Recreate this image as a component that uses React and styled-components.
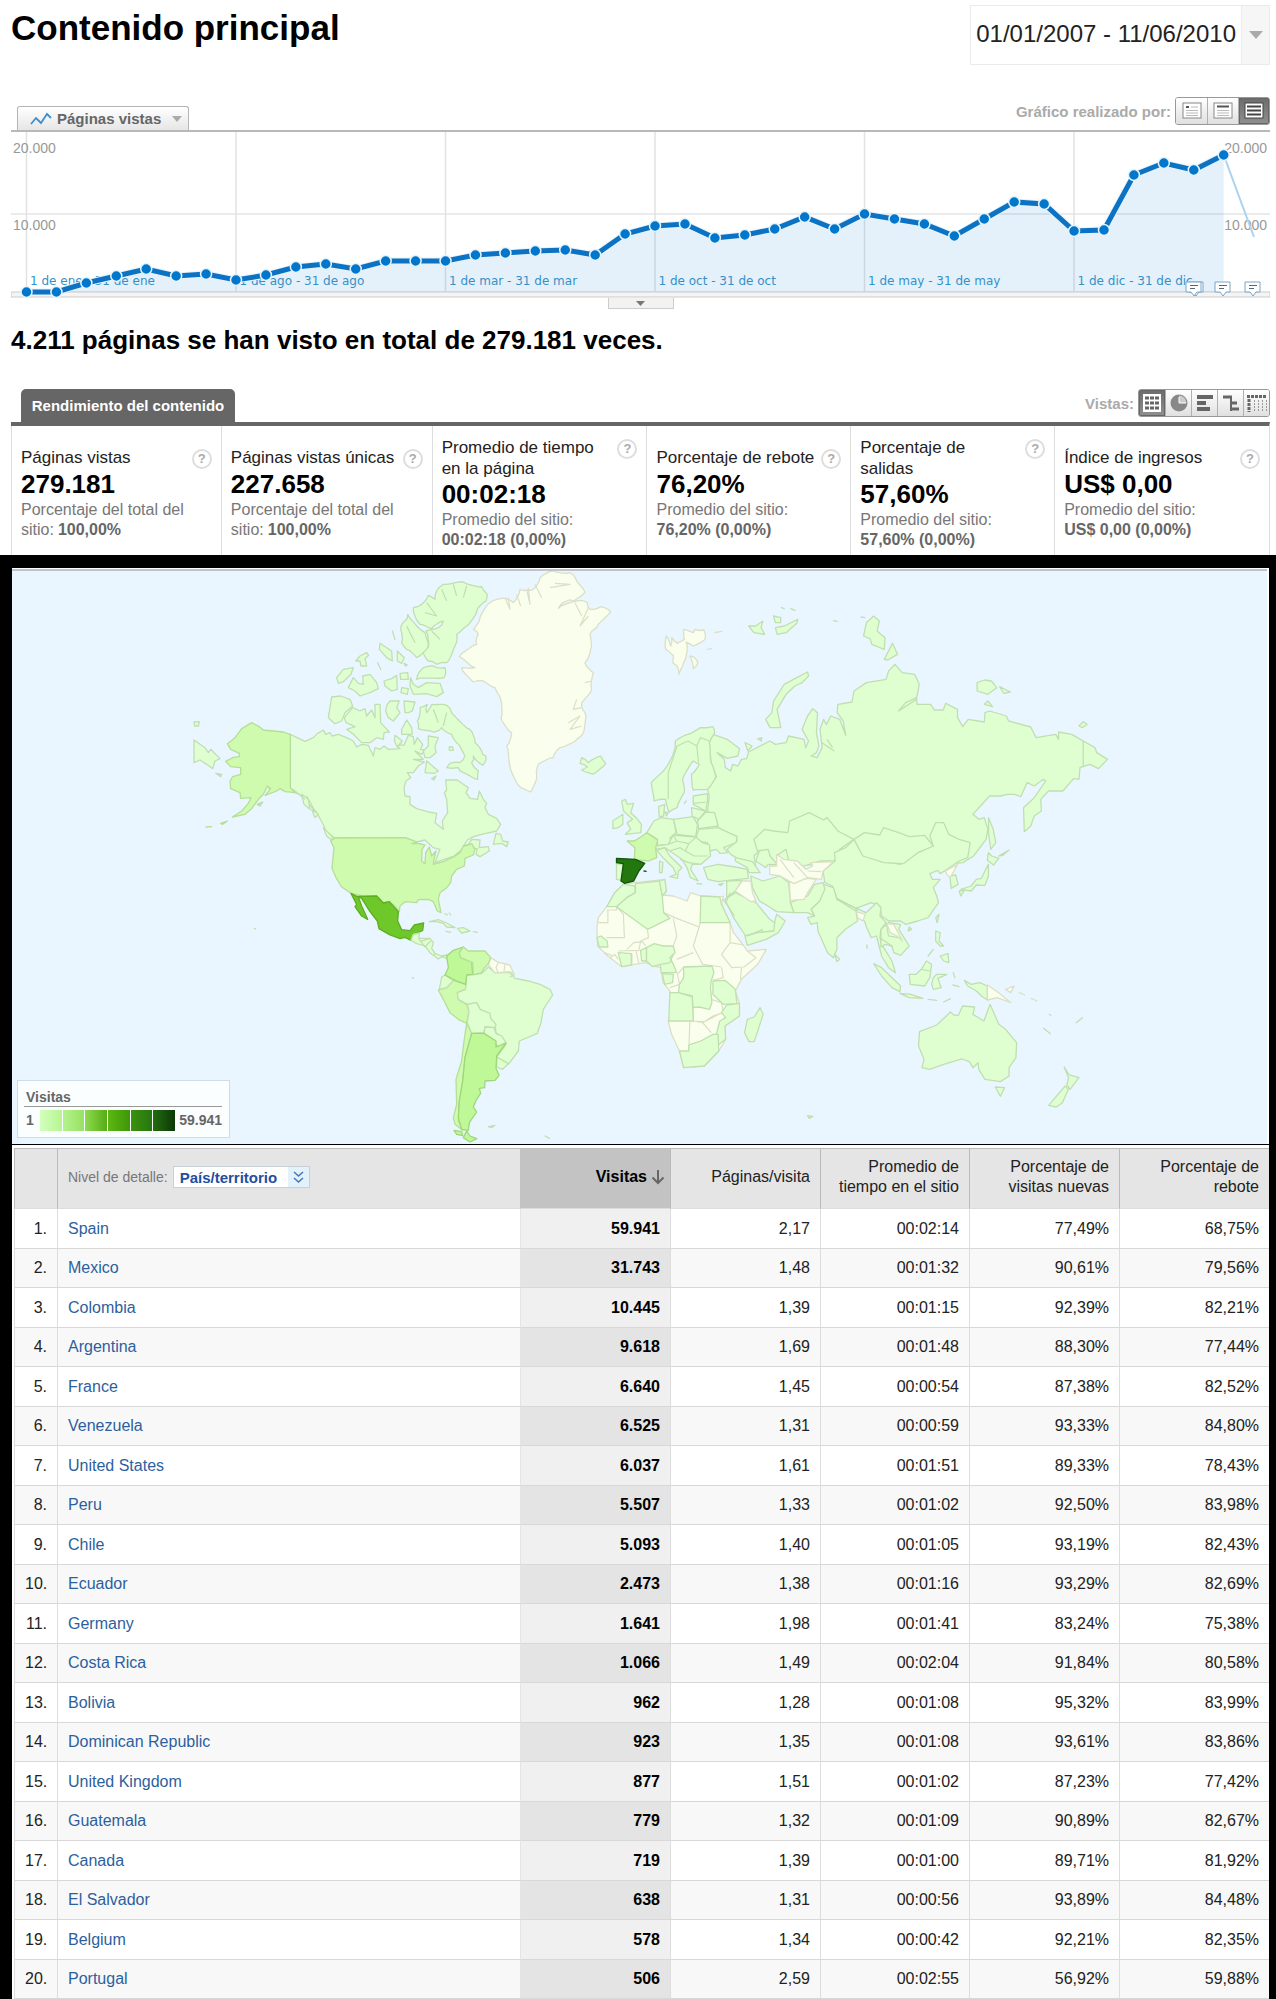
import React from 'react';
import styled, { createGlobalStyle, css } from 'styled-components';

const GlobalStyle = createGlobalStyle`
  * { box-sizing: border-box; }
  html, body { margin: 0; padding: 0; background: #000; }
  body, button, select {
    font-family: "Liberation Sans", Arial, Helvetica, sans-serif;
  }
  h1, h2, p, ul, dl, dd, dt { margin: 0; padding: 0; }
  button { padding: 0; cursor: pointer; }
`;

/* ---------- summary section ---------- */

const Summary = styled.section`
  background: #fff;
  padding: 5px 6px 0 11px;
`;

const Header = styled.header`
  display: flex;
  justify-content: space-between;
  align-items: flex-start;
  margin-bottom: 32px;
`;

const Title = styled.h1`
  font-size: 35px;
  line-height: 46px;
  color: #000;
`;

const DateButton = styled.button`
  display: flex;
  align-items: stretch;
  height: 60px;
  border: 1px solid #ebebeb;
  background: #fff;
  color: #222;
  font-size: 24px;
`;

const DateText = styled.span`
  display: flex;
  align-items: center;
  padding: 0 5px 2px 5px;
`;

const DateArrow = styled.span`
  display: flex;
  align-items: center;
  justify-content: center;
  width: 28px;
  border-left: 1px solid #ebebeb;
  background: #f6f6f6;
`;

const Toolbar = styled.div`
  display: flex;
  justify-content: space-between;
  align-items: flex-start;
`;

const MetricTab = styled.button`
  display: flex;
  align-items: center;
  gap: 5px;
  width: 172px;
  height: 24px;
  margin: 9px 0 0 6px;
  padding: 0 6px 0 12px;
  border: 1px solid #b4b4b4;
  border-bottom: 0;
  border-radius: 3px 3px 0 0;
  background: linear-gradient(#fff, #e6e6e6);
  color: #666;
  font-size: 15px;
  font-weight: bold;
  svg:last-child { margin-left: auto; }
`;

const Views = styled.div`
  display: flex;
  align-items: center;
  gap: 4px;
  color: #aaa;
  font-size: 15px;
  font-weight: bold;
`;

const ButtonGroup = styled.div`
  display: flex;
  height: 28px;
  border: 1px solid #999;
  border-radius: 3px;
  overflow: hidden;
`;

const IconButton = styled.button`
  display: flex;
  align-items: center;
  justify-content: center;
  width: ${(p) => (p.$wide ? 31 : 26)}px;
  border: 0;
  background: linear-gradient(#fff, #e0e0e0);
  & + & { border-left: 1px solid #b0b0b0; }
  ${(p) => p.$active && css`
    background: linear-gradient(#6c6c6c, #8f8f8f);
    box-shadow: inset 0 0 0 1px #666;
  `}
`;

const ChartPanel = styled.div`
  display: flex;
  flex-direction: column;
  align-items: center;
  border-top: 2px solid #b8b8b8;
  svg.plot { display: block; width: 100%; height: auto; }
`;

const Handle = styled.button`
  display: flex;
  align-items: center;
  justify-content: center;
  width: 66px;
  height: 11px;
  border: 1px solid #ccc;
  border-top: 0;
  background: #f2f2f2;
`;

const Headline = styled.h2`
  margin: 15px 0 33px;
  font-size: 26px;
  line-height: 32px;
  color: #000;
`;

const SectionTab = styled.div`
  width: 214px;
  height: 33px;
  margin-left: 10px;
  border-radius: 5px 5px 0 0;
  background: #666;
  color: #fff;
  font-size: 15px;
  font-weight: bold;
  line-height: 33px;
  text-align: center;
`;

const Metrics = styled.dl`
  display: grid;
  grid-template-columns: 210fr 211fr 215fr 204fr 204fr 215fr;
  height: 133px;
  border-top: 4px solid #666;
  border-right: 1px solid #ddd;
`;

const Metric = styled.div`
  display: flex;
  flex-direction: column;
  justify-content: center;
  padding: 5px 9px 0 9px;
  border-left: 1px solid #ddd;
`;

const MetricLabel = styled.dt`
  display: flex;
  justify-content: space-between;
  align-items: flex-start;
  gap: 4px;
  color: #222;
  font-size: 17px;
  line-height: 21px;
`;

const MetricValue = styled.dd`
  font-size: 26px;
  font-weight: bold;
  line-height: 31px;
  color: #000;
`;

const MetricNote = styled.dd`
  color: #777;
  font-size: 16px;
  line-height: 20px;
`;

const NoteLine = styled.span`
  display: flex;
  gap: 4px;
  b { color: #666; }
`;

const Help = styled.button`
  flex: none;
  width: 20px;
  height: 20px;
  margin-top: 2px;
  border: 2px solid #ddd;
  border-radius: 50%;
  background: #fff;
  color: #aaa;
  font-size: 13px;
  font-weight: bold;
  line-height: 16px;
`;

/* ---------- map and table section ---------- */

const Detail = styled.section`
  padding: 13px 7px 1px 12px;
  background: #000;
`;

const MapPanel = styled.div`
  position: relative;
  padding: 1px 2px 0 0;
  background: #fff;
  border-bottom: 1px solid #000;
  svg.world {
    display: block;
    width: 100%;
    height: auto;
    border-top: 2px solid #c2c2cc;
    background: #e9f6ff;
  }
`;

const Legend = styled.div`
  position: absolute;
  left: 5px;
  bottom: 6px;
  width: 213px;
  padding: 8px 7px 6px 6px;
  border: 1px solid #cfdce6;
  background: #fbfeff;
  color: #666;
  font-size: 14px;
  font-weight: bold;
`;

const LegendTitle = styled.p`
  padding-left: 2px;
  border-bottom: 1px solid #999;
  line-height: 17px;
`;

const LegendScale = styled.div`
  display: flex;
  align-items: center;
  gap: 4px;
  padding: 3px 0 0 2px;
  line-height: 21px;
`;

const Ramp = styled.div`
  display: flex;
  flex: 1;
  gap: 1px;
  height: 21px;
  margin-left: 2px;
`;

const Swatch = styled.span`
  flex: 1;
  background: linear-gradient(90deg, ${(p) => p.$from}, ${(p) => p.$to});
`;

const TablePanel = styled.div`
  padding: 3px 0 0 2px;
  background: #fff;
`;

const Table = styled.table`
  width: 100%;
  table-layout: fixed;
  border-collapse: separate;
  border-spacing: 0;
  color: #222;
  font-size: 16px;
  line-height: 20px;
`;

const Col = styled.col`
  width: ${(p) => p.$w};
`;

const HeadCell = styled.th`
  height: 61px;
  padding: 0 10px 3px;
  border-top: 1px solid #bbb;
  border-left: 1px solid ${(p) => (p.$sorted ? '#c3c3c3' : '#bbb')};
  border-bottom: 1px solid #ddd;
  background: ${(p) => (p.$sorted ? '#c3c3c3' : '#e5e5e5')};
  color: ${(p) => (p.$sorted ? '#000' : '#222')};
  font-weight: ${(p) => (p.$sorted ? 'bold' : 'normal')};
  text-align: ${(p) => (p.$left ? 'left' : 'right')};
  ${(p) => p.$sorted && css`padding-right: 5px;`}
`;

const SortLabel = styled.span`
  display: flex;
  align-items: center;
  justify-content: flex-end;
  gap: 4px;
`;

const LevelLabel = styled.label`
  display: flex;
  align-items: center;
  gap: 5px;
  color: #777;
  font-size: 14px;
`;

const SelectBox = styled.span`
  position: relative;
  display: inline-flex;
  svg { position: absolute; right: 1px; top: 1px; pointer-events: none; }
`;

const Select = styled.select`
  appearance: none;
  width: 137px;
  height: 22px;
  padding: 0 24px 0 6px;
  border: 1px solid #c5d0da;
  border-radius: 0;
  background: #fff;
  color: #1f4ea1;
  font-size: 15px;
  font-weight: bold;
`;

const Row = styled.tr`
  background: #fff;
  td { height: 40px; }
  &:nth-child(even) { background: #f8f8f8; }
  &:nth-child(even) td { height: 39px; }
`;

const Cell = styled.td`
  padding: 0 10px;
  border-left: 1px solid #ddd;
  border-bottom: 1px solid #d8d8d8;
  text-align: ${(p) => (p.$left ? 'left' : 'right')};
  ${(p) => p.$sorted && css`
    border-left-color: #e4e4e4;
    background: #f0f0f0;
    color: #000;
    font-weight: bold;
    ${Row}:nth-child(even) & { background: #e4e4e4; }
  `}
`;

const CountryLink = styled.a`
  color: #2d5f9e;
  text-decoration: none;
`;

/* ---------- data ---------- */

const metrics = [
  { label: 'Páginas vistas', value: '279.181', note: 'Porcentaje del total del', prefix: 'sitio:', strong: '100,00%' },
  { label: 'Páginas vistas únicas', value: '227.658', note: 'Porcentaje del total del', prefix: 'sitio:', strong: '100,00%' },
  { label: 'Promedio de tiempo en la página', value: '00:02:18', note: 'Promedio del sitio:', strong: '00:02:18 (0,00%)' },
  { label: 'Porcentaje de rebote', value: '76,20%', note: 'Promedio del sitio:', strong: '76,20% (0,00%)' },
  { label: 'Porcentaje de salidas', value: '57,60%', note: 'Promedio del sitio:', strong: '57,60% (0,00%)' },
  { label: 'Índice de ingresos', value: 'US$ 0,00', note: 'Promedio del sitio:', strong: 'US$ 0,00 (0,00%)' },
];

const rows = [
  ['Spain', '59.941', '2,17', '00:02:14', '77,49%', '68,75%'],
  ['Mexico', '31.743', '1,48', '00:01:32', '90,61%', '79,56%'],
  ['Colombia', '10.445', '1,39', '00:01:15', '92,39%', '82,21%'],
  ['Argentina', '9.618', '1,69', '00:01:48', '88,30%', '77,44%'],
  ['France', '6.640', '1,45', '00:00:54', '87,38%', '82,52%'],
  ['Venezuela', '6.525', '1,31', '00:00:59', '93,33%', '84,80%'],
  ['United States', '6.037', '1,61', '00:01:51', '89,33%', '78,43%'],
  ['Peru', '5.507', '1,33', '00:01:02', '92,50%', '83,98%'],
  ['Chile', '5.093', '1,40', '00:01:05', '93,19%', '82,43%'],
  ['Ecuador', '2.473', '1,38', '00:01:16', '93,29%', '82,69%'],
  ['Germany', '1.641', '1,98', '00:01:41', '83,24%', '75,38%'],
  ['Costa Rica', '1.066', '1,49', '00:02:04', '91,84%', '80,58%'],
  ['Bolivia', '962', '1,28', '00:01:08', '95,32%', '83,99%'],
  ['Dominican Republic', '923', '1,35', '00:01:08', '93,61%', '83,86%'],
  ['United Kingdom', '877', '1,51', '00:01:02', '87,23%', '77,42%'],
  ['Guatemala', '779', '1,32', '00:01:09', '90,89%', '82,67%'],
  ['Canada', '719', '1,39', '00:01:00', '89,71%', '81,92%'],
  ['El Salvador', '638', '1,31', '00:00:56', '93,89%', '84,48%'],
  ['Belgium', '578', '1,34', '00:00:42', '92,21%', '82,35%'],
  ['Portugal', '506', '2,59', '00:02:55', '56,92%', '59,88%'],
];

const swatches = [
  ['#d3ffbd', '#b6f592'],
  ['#b4f28c', '#98e262'],
  ['#8edb4f', '#57ac15'],
  ['#5cb812', '#3f9609'],
  ['#3c910f', '#26760e'],
  ['#236c10', '#0d3806'],
];

/* ---------- line chart ---------- */

const series = [
  160, 160, 151, 144, 137, 144, 142, 148, 143, 135, 132, 137, 129, 129, 129, 123, 121, 119,
  118, 123, 102, 94, 92, 106, 103, 97, 85, 97, 82, 87, 92, 104, 87, 70, 72, 99, 98, 43, 31, 38, 23,
];
const pointX = (i) => 15.5 + i * 29.93;
const months = ['ene', 'ago', 'mar', 'oct', 'may', 'dic'];

function Note({ x, double }) {
  return (
    <g transform={`translate(${x} 149)`} fill="#fff" stroke="#7ba6c4">
      {double && <path d="M3 1h14v10h-4l-3 4-3-4H3z" />}
      <path d="M0 1h15v10h-4l-3 4-3-4H0z" />
      <path d="M4 4.500h8M4 7.500h5" stroke="#567" />
    </g>
  );
}

function PageviewsChart() {
  const pts = series.map((y, i) => `${pointX(i)},${y}`);
  const lastX = pointX(series.length - 1);
  return (
    <svg className="plot" viewBox="0 0 1259 166" role="img" aria-label="Páginas vistas">
      <rect x="0" y="160" width="1259" height="5" fill="#f4f4f4" stroke="#ccc" />
      <path d="M0 82H1259" stroke="#e4e4e4" strokeWidth="1.500" />
      {months.map((m, i) => (
        <path key={m} d={`M${15.5 + i * 209.500} 0V160`} stroke="#e2e2e2" strokeWidth="1.500" />
      ))}
      <g fontFamily="Liberation Sans, Arial, sans-serif" fontSize="14" fill="#999">
        <text x="2" y="21">20.000</text>
        <text x="2" y="98">10.000</text>
        <text x="1256" y="21" textAnchor="end">20.000</text>
        <text x="1256" y="98" textAnchor="end">10.000</text>
      </g>
      <polygon points={`15.5,160 ${pts.join(' ')} ${lastX},160`} fill="#0077cc" fillOpacity="0.1" />
      <g fontFamily="DejaVu Sans, Verdana, sans-serif" fontSize="12" fill="#3590c8">
        {months.map((m, i) => (
          <text key={m} x={19 + i * 209.500} y="153">{`1 de ${m} - 31 de ${m}`}</text>
        ))}
      </g>
      <path d={`M${lastX} 23L1243 105`} stroke="#a9d3ee" strokeWidth="2" />
      <polyline points={pts.join(' ')} fill="none" stroke="#e6f3fb" strokeWidth="7" />
      <polyline points={pts.join(' ')} fill="none" stroke="#0b72c4" strokeWidth="5" />
      {series.map((y, i) => (
        <circle key={i} cx={pointX(i)} cy={y} r="5.500" fill="#0077cc" stroke="#e6f3fb" strokeWidth="1.500" />
      ))}
      <Note x={1175} double />
      <Note x={1204} />
      <Note x={1234} />
    </svg>
  );
}

/* ---------- world map ---------- */

const shades = {
  none: ['#f9ffec', '#dcdfc6'],
  low: ['#dfffd1', '#c0dfb0'],
  mid: ['#cefbae', '#b5de97'],
  high: ['#bff896', '#9fd67a'],
  mexico: ['#6fc82a', '#5cae1e'],
  spain: ['#22780f', '#14540a'],
};

/* Breaks each edge into short steps that zigzag, for fjord coasts. */
function rugged(points, amp) {
  const p = points.split(' ').map((s) => s.split(',').map(Number));
  const out = [];
  p.forEach(([x, y], i) => {
    const [nx, ny] = p[(i + 1) % p.length];
    const len = Math.hypot(nx - x, ny - y);
    const n = Math.max(1, Math.floor(len / 9));
    for (let k = 0; k < n; k += 1) {
      const w = k === 0 ? 0 : Math.sin((x + k * 37) * 12.9 + y * 7.1) * amp;
      const t = k / n;
      out.push(`${(x + (nx - x) * t - ((ny - y) / len) * w).toFixed(1)},${(y + (ny - y) * t + ((nx - x) / len) * w).toFixed(1)}`);
    }
  });
  return out.join(' ');
}

function Land({ shade = 'low', rough = 0, shapes }) {
  const [fill, stroke] = shades[shade];
  return shapes.map((s, i) => (
    <polygon
      key={i}
      points={rough ? rugged(s, rough) : s}
      fill={fill}
      stroke={stroke}
      strokeWidth="1.300"
      strokeLinejoin="round"
      vectorEffect="non-scaling-stroke"
    />
  ));
}

function Lines({ shade = 'low', d }) {
  return <path d={d} fill="none" stroke={shades[shade][1]} strokeWidth="1.200" strokeLinejoin="round" vectorEffect="non-scaling-stroke" />;
}

function NorthAmerica() {
  return (
    <g transform="translate(180 565) scale(0.33333)">
      <Land shapes={[
        '331,505 375,526 400,515 412,503 430,492 437,505 450,500 456,510 475,505 500,515 520,525 530,543 545,535 565,538 580,570 585,545 600,550 612,540 625,550 660,548 650,535 672,538 685,508 700,512 703,535 712,515 728,535 722,550 735,552 725,565 705,555 730,580 700,580 733,588 715,600 700,620 682,620 692,635 678,645 672,665 675,690 690,692 690,715 710,728 745,738 770,742 765,770 790,790 787,765 803,740 800,700 793,680 800,672 797,642 832,642 850,655 865,665 858,680 870,697 893,700 898,675 910,700 920,712 915,725 925,745 950,757 962,775 950,795 905,805 880,812 862,822 850,840 865,835 875,820 900,822 898,845 925,842 928,855 900,872 888,865 892,848 865,845 840,855 822,870 765,890 775,862 780,850 760,845 735,822 710,828 675,815 465,816 440,800 432,780 410,740 385,712 370,690 345,680 331,665',
        '948,802 962,805 968,825 985,828 980,842 965,832 940,835',
        '42,522 75,545 85,560 92,550 120,578 105,585 98,608 80,595 60,582 42,590',
        '42,468 58,467 55,480 44,480', '107,622 125,625 122,632', '265,665 290,660 298,668 280,676', '430,785 455,810 462,828 440,810',
        '365,685 385,700 390,730 372,715', '395,730 415,745 405,755',
        '455,393 482,390 510,400 518,420 495,440 485,465 465,473 445,455',
        '518,425 540,435 555,428 560,450 575,432 585,455 585,415 600,415 602,470 628,498 612,500 610,520 590,515 570,530 545,530 520,505 500,490 525,482 498,470 493,455',
        '620,418 630,405 658,405 650,425 660,440 640,465 625,455 617,435', '672,405 705,408 697,435 685,440 675,440', '680,462 695,485 697,505 665,505 665,490', '645,508 667,525 652,543 643,525',
        '745,510 775,515 765,540 768,560 750,575 735,575 730,555 745,540', '740,585 775,615 762,622 735,620', '808,542 818,543 820,553 808,553', '755,638 768,630 762,642',
        '470,335 490,310 520,305 513,325 490,347 475,352', '505,365 520,335 535,352 550,355 548,330 570,325 590,350 595,368 570,380 540,390 525,375',
        '600,232 612,240 635,255 637,285 620,275 598,250', '652,255 673,275 665,292 652,285', '540,270 560,260 566,268 555,278 560,300 543,300 540,285 527,285',
        '612,345 635,338 650,328 652,370 635,375 615,360', '660,322 683,320 685,340 662,340', '665,365 685,368 682,385 663,380',
        '692,335 700,355 715,365 740,350 780,352 790,380 770,392 740,383 700,385 690,360', '637,195 645,220', '593,290 602,310', '672,292 682,297 677,300',
      ]} />
      <Land rough={3.500} shapes={[
        '770,75 790,55 850,48 905,62 922,85 918,105 890,135 860,180 830,205 825,240 800,290 770,295 745,285 725,255 745,245 738,195 775,185 790,165 755,188 720,175 705,150 700,125 725,115 745,88 765,100',
        '683,145 710,180 735,200 745,240 710,275 680,250 665,230 662,190 675,165',
        '725,310 760,300 795,305 792,335 710,340',
        '720,425 742,415 740,440 755,415 800,418 815,440 870,490 885,530 908,565 918,570 908,598 880,570 875,590 895,615 893,640 850,620 835,605 800,605 810,592 838,590 855,570 830,530 815,505 785,485 760,498 715,488 712,465',
      ]} />
      <Land shade="none" rough={3.500} shapes={[
        '930,110 965,97 1000,110 1020,70 1060,70 1080,35 1120,15 1170,20 1190,45 1215,78 1180,105 1160,105 1135,127 1190,105 1222,110 1230,130 1262,122 1292,138 1250,185 1230,205 1232,250 1215,290 1240,320 1235,370 1205,410 1215,440 1212,495 1190,520 1140,545 1120,575 1075,595 1070,630 1052,678 1018,660 990,600 980,540 995,500 963,455 962,400 945,365 910,345 880,348 845,305 885,305 838,272 890,235 895,205 880,190 900,155',
      ]} />
      <Lines shade="none" d="M975 95L990 130L985 95M1010 85L1022 120M1040 70L1050 115L1045 65M1065 55L1085 95M1110 65L1170 55L1125 52M1185 110L1205 150M1225 125L1200 180L1225 150M1190 400L1180 430L1205 425M1165 470L1200 450L1170 490L1205 480M1215 350L1235 345" />
      <Lines d="M740 110L770 150L735 140M785 70L800 105M820 55L830 90M860 60L850 95M755 195L780 220M680 180L705 230M760 430L775 470M800 440L790 480M380 690L405 735M340 670L375 700" />
      <Land rough={2} shapes={['1205,575 1225,590 1262,570 1277,592 1240,624 1205,612 1222,603 1200,592']} />
      <Land shade="mid" shapes={[
        '331,505 310,498 250,492 238,482 215,470 185,488 165,515 142,533 152,550 178,562 178,572 160,574 137,586 152,602 182,605 182,625 158,632 150,645 152,668 180,680 182,697 213,695 205,712 185,735 157,753 195,745 215,728 235,700 250,685 262,660 272,668 255,688 290,675 300,668 315,677 345,680 331,665',
        '232,715 248,708 240,720', '122,772 142,765 128,775', '78,783 95,782',
      ]} />
    </g>
  );
}

function LatinAmerica() {
  return (
    <g transform="translate(180 840) scale(0.33333)">
      <Land shade="mid" shapes={[
        '465,-9 675,-10 712,3 695,8 718,8 735,12 726,25 725,60 735,68 737,35 748,18 755,45 768,30 762,55 760,70 790,62 820,48 840,35 850,15 865,12 875,8 885,25 880,42 855,52 853,75 830,85 815,105 812,125 800,140 780,155 775,175 783,215 772,210 760,182 745,175 715,176 710,185 675,182 660,195 658,212 640,190 622,183 610,186 590,165 555,166 513,157 485,138 468,110 456,82 462,20 452,0',
        '820,418 857,430 857,445 832,455 835,475 860,490 867,510 860,547 835,535 810,515 790,475 775,447 800,440',
        '860,547 875,577 855,650 848,720 838,780 835,840 848,868 825,850 820,830 830,790 828,715 845,660 852,600',
      ]} />
      <Land shade="mexico" shapes={['513,157 530,166 590,165 610,186 628,182 655,212 653,240 665,266 690,269 703,252 731,246 728,268 712,276 693,298 675,289 660,293 630,282 597,263 592,240 570,212 545,172 535,168 545,195 563,235 545,225 525,197 530,190']} />
      <Land shapes={[
        '693,298 700,280 718,276 716,292 750,292 760,305 755,322 765,338 785,345 800,342 800,352 785,347 775,354 750,335 735,315 710,308',
        '748,242 775,236 800,246 825,260 800,258 790,247 770,242', '832,262 850,260 870,270 845,276', '798,271 812,274', '880,272 892,274', '795,218 802,222', '808,216 812,222',
        '795,402 820,418 800,440 778,445 785,408',
        '860,402 905,398 925,378 945,395 990,395 1005,412 1045,420 1080,430 1110,445 1118,462 1090,505 1083,545 1072,577 1018,600 1015,630 985,670 950,648 978,610 965,590 948,575 945,548 930,530 900,505 890,485 862,490 835,475 832,455 857,445',
        '862,490 890,485 900,505 930,517 932,533 948,550 945,560 915,558 912,575 875,577 862,545 867,510',
        '915,558 942,560 948,578 965,585 978,605 955,618 945,605 912,580',
        '950,648 985,668 968,685 950,678', '925,857 945,853 935,860', '1095,885 1108,892', '223,262 227,264', '697,410 701,412',
      ]} />
      <Lines d="M716 292L735 318L752 300M750 292L720 302M765 338L760 345M990 408L1005 400" />
      <Land shade="none" shapes={['932,350 955,364 990,372 1002,400 990,392 945,396 925,370']} />
      <Lines shade="none" d="M955 364L948 380L955 395M975 370L972 392" />
      <Land shade="high" shapes={[
        '800,345 820,328 850,318 838,335 842,350 875,362 878,400 860,402 857,430 830,420 795,402 805,380',
        '875,577 912,577 948,600 948,618 978,606 950,645 948,682 957,703 945,718 915,720 914,740 898,742 902,757 890,775 880,798 890,813 868,845 865,868 845,865 835,830 838,780 848,720 855,650',
        '860,870 870,885 890,893 870,903 850,890', '822,868 845,872 848,884 830,880',
      ]} />
      <Land shade="mid" shapes={['850,318 865,330 915,330 932,350 925,368 912,382 905,395 880,402 878,365 842,350 838,335']} />
    </g>
  );
}

function NorthEurasia() {
  return (
    <g transform="translate(570 565) scale(0.35714 0.33333)">
      <Land shade="none" rough={2.500} shapes={[
        '270,210 282,240 285,215 300,232 320,220 318,190 345,200 350,190 375,192 378,220 345,240 325,228 328,250 318,290 305,325 300,300 288,290 290,270 268,250', '335,270 345,272 358,290 345,308', '405,200 425,196', '385,250 397,248',
      ]} />
      <Land shapes={[
        '500,180 520,180 540,165 535,185 545,205 515,200', '570,150 590,155 590,170 575,170', '575,185 600,180 638,160 635,172 605,200 580,205', '592,125 600,128', '618,128 630,133',
        '665,318 668,330 650,350 630,360 605,385 580,430 590,485 560,485 548,460 565,440 570,405 600,355 635,335',
        '850,150 866,165 860,195 882,215 880,250 845,235 840,218 822,210 830,170', '903,232 917,265 890,282 880,280', '815,153 825,155', '738,164 748,166',
        '1140,350 1160,342 1180,345 1195,365 1170,385 1140,375', '1203,362 1233,378 1215,382', '1160,415 1170,405 1183,422', '1425,480 1437,467 1448,475 1435,485', '525,518 537,516 535,525', '490,530 510,540 498,555',
        '400,505 440,520 475,548 470,570 440,577 412,560 432,580 435,605 450,615 455,595 470,600 480,580 495,578 500,558 560,525 575,535 605,530 612,510 655,520 660,545 668,525 650,490 665,450 680,428 693,440 690,500 697,540 690,560 675,570 692,575 706,545 700,490 710,460 718,475 730,450 755,460 772,508 765,465 748,440 750,415 790,408 795,375 830,350 885,340 892,315 910,295 930,320 965,325 978,355 970,400 920,435 940,410 970,395 972,415 1010,415 1020,432 1045,432 1052,412 1085,430 1085,455 1100,482 1115,460 1160,468 1162,440 1175,435 1222,450 1228,465 1290,483 1305,515 1360,505 1368,520 1368,498 1405,505 1437,525 1470,545 1475,560 1505,580 1480,608 1455,595 1428,605 1425,640 1410,638 1380,675 1340,675 1318,700 1320,735 1300,750 1290,780 1272,797 1270,725 1300,695 1332,645 1325,640 1300,660 1280,650 1262,692 1245,685 1225,685 1205,690 1175,690 1128,745 1145,760 1160,755 1170,790 1165,820 1130,870 1100,890 1000,900 555,895 548,905 520,885 530,855 515,870 520,900 480,885 450,865 440,850 468,825 465,810 415,790 410,760 385,735 390,690 385,670 410,632 395,590 390,530',
        '1172,755 1185,790 1192,830 1178,850 1172,800',
        '515,820 545,790 570,795 610,800 615,765 670,740 710,762 720,755 750,795 795,820 755,850 740,885 700,885 640,905 615,895 605,850 580,868 580,895 560,870 555,850 525,855',
        '155,700 160,715 178,712 170,740 185,755 200,775 198,800 155,805 170,790 160,770 175,760 150,735 145,705', '120,765 148,745 148,775 135,785 120,788', '248,722 265,715 262,750 250,752', '265,738 275,740 270,750', '320,712 325,705',
        '215,800 235,765 255,755 290,760 297,800 280,815 285,835 245,838 245,820', '290,760 345,752 357,775 352,812 300,805',
        '345,690 385,683 385,705 380,735 345,715', '340,725 380,735 360,760 342,750', '380,738 405,740 415,780 360,788 357,765', '360,790 415,785 468,812 465,830 430,845 442,860 420,862 410,850 390,855 385,830 350,825',
      ]} />
      <Land rough={2} shapes={['278,738 268,700 235,705 228,650 265,610 290,560 295,525 330,505 365,485 400,482 405,500 390,530 395,590 408,632 385,670 345,672 340,625 362,595 345,585 315,640 320,680 300,725']} />
      <Lines d="M275 700L275 620L300 540L330 525L355 540L360 590M355 540L365 515L390 525M1437 525V600M345 712L382 708M705 530L740 555M720 520L735 545" />
      <Land shade="mid" shapes={['180,825 195,815 215,800 245,822 240,850 243,875 220,885 180,880 182,845 160,825']} />
    </g>
  );
}

function SouthernOldWorld() {
  return (
    <g transform="translate(570 820) scale(0.34436 0.33333)">
      <Land shapes={[
        '825,55 800,80 768,95 770,120 735,150 740,185 762,195 775,232 830,262 875,245 900,255 905,285 925,300 960,300 975,310 1010,300 1040,290 1070,245 1065,225 1055,200 1075,175 1052,175 1045,158 1068,148 1075,158 1095,145 1130,120 1155,110 1162,65 1130,55 1100,40 1085,5 1062,5 1045,45 1055,75 1010,95 960,130 900,120 850,100',
        '825,55 855,35 900,42 910,20 955,35 985,47 1030,43 1055,75 1010,95 968,128 912,125 850,105',
        '985,318 992,325 982,330', '1062,290 1072,280 1066,305', '1103,165 1120,162 1127,190 1107,202',
        '1215,95 1225,105 1245,112 1230,132 1212,118', '1245,105 1275,87 1258,102', '1215,130 1215,165 1205,193 1180,192 1165,210 1135,205 1165,195 1180,175 1195,172 1205,150', '1130,210 1145,208 1135,225',
        '735,190 765,200 775,235 830,262 832,280 835,300 800,325 775,350 775,385 765,410 748,395 720,330 718,305 700,310 690,290 710,285 700,265 725,240',
        '640,245 690,225 710,190 735,185 740,205 725,240 700,265 710,285 690,275 650,275',
        '525,165 560,180 610,165 635,185 640,245 650,275 600,272 575,255 550,240 530,200', '388,140 430,130 480,138 515,145 518,172 460,178 430,182 400,175', '480,110 530,122 552,155 520,155 515,140 480,120',
        '455,180 500,178 480,210 455,230', '450,235 480,215 540,245 560,270 580,295 600,310 592,330 545,335 510,345 475,290',
        '508,345 545,335 592,330 595,300 600,280 625,300 605,335 570,355 515,373', '432,190 445,187 438,194', '368,188 382,189',
        '832,262 860,275 890,245 903,260 900,285 918,305 903,325 900,350 905,370 935,420 945,455 925,440 905,405 890,345 875,350 862,320 855,300 835,290',
        '903,325 925,305 960,310 955,325 985,375 960,403 940,395 935,375 915,370 903,378', '768,400 783,415 775,422',
        '882,428 905,440 960,495 958,512 935,500 905,465', '958,517 990,520 1025,532 985,530', '985,460 1005,460 1020,445 1035,420 1050,430 1045,470 1030,495 988,490', '1055,470 1065,460 1095,460 1068,472 1078,500 1055,505 1050,490',
        '1062,330 1075,335 1072,360 1085,375 1075,375 1062,360', '1075,405 1098,398 1100,425 1085,420', '1040,405 1055,385', '1040,535 1065,538', '1085,543 1105,533', '1113,455 1118,470', '1112,492 1130,497', '862,372 863,382',
        '1145,478 1165,490 1190,485 1212,495 1212,537 1195,525 1180,510 1155,495',
        '1015,632 1065,612 1105,573 1115,582 1128,583 1140,555 1175,558 1170,580 1202,600 1220,550 1245,610 1265,625 1297,665 1295,710 1275,740 1275,765 1250,782 1205,775 1187,745 1185,725 1170,740 1160,722 1138,714 1085,730 1045,745 1022,740 1028,715 1012,675',
        '1235,798 1262,800 1250,826', '1435,738 1450,762 1478,770 1452,805 1443,792 1448,770', '1438,795 1447,805 1430,845 1412,858 1390,853',
        '1375,622 1395,638', '1470,605 1488,590', '1392,580 1396,583', '690,884 705,886 695,892', '552,560 561,580 535,662 520,662 507,635 515,595 535,588',
        '135,128 155,132 150,178 135,175', '252,88 275,80 290,105 325,140 315,150 312,172 290,167 308,160 300,140 270,110', '260,120 270,125 267,155 260,155',
        '248,75 285,70 300,42 365,48 385,65 405,72 408,105 380,130 355,130 350,145 372,180 350,170 340,140 325,115 290,90 275,80 252,85',
      ]} />
      <Lines d="M285 70L310 60L345 68L365 50M310 60L300 42M345 68L335 90L360 105L400 105M335 90L320 80L290 90M320 115L345 125L380 130M515 345L560 325M1020 445L1045 450M775 235L830 270M900 350L935 375M918 305L925 345L955 350" />
      <Land shade="none" shapes={[
        '1090,150 1125,130 1115,150 1105,168 1095,162', '832,272 858,280 850,300 835,290', '637,185 690,172 715,175 690,215 680,235 640,238',
        '580,135 600,135 600,100 620,115 660,120 685,145 705,135 700,125 765,122 735,150 730,175 690,170 650,188 610,165 580,160',
        '500,180 525,180 530,215 540,240 525,242 480,210', '920,308 940,310 965,360 950,345 930,335', '1212,492 1245,515 1280,545 1240,530 1212,537', '1265,505 1290,495 1280,515', '1305,515 1320,522', '1340,532 1355,540',
        '155,190 190,185 275,175 280,210 270,222 300,225 340,240 350,215 380,225 435,228 445,225 440,250 465,305 475,335 505,375 515,390 570,385 545,430 498,475 480,510 492,545 492,585 450,615 452,655 432,690 390,735 330,740 318,690 295,640 285,600 297,560 290,510 270,485 265,440 245,435 220,425 150,437 110,405 80,375 78,320 82,290 107,257 130,215',
      ]} />
      <Lines shade="none" d="M107 267L135 267L135 257L155 280L158 350L105 350M82 305L110 305L110 268M225 325L228 350L205 360L200 388L140 390M165 385L185 365L210 362L220 375M300 292L310 345L300 375M272 275L310 292L375 318L378 305M375 318L358 375L385 430L440 438M310 415L358 395M465 305L465 365L440 400L470 440L505 438L540 410L515 390M465 365L505 372M440 440L445 470L415 478M498 440L495 475M358 600L385 605L432 580M348 600L345 690M358 565L358 600L390 602L415 585L445 575L440 545L410 535M385 605L410 635M345 672L380 660M180 398V432M192 390L200 428M100 395L125 405M115 412L130 400L140 415M610 115L650 170M650 125L690 170M690 150L730 152M330 438L312 460L318 490L290 500" />
      <Land shapes={[
        '155,190 188,195 190,215 165,230 135,257 107,257 130,215', '190,188 260,180 268,225 272,275 290,292 225,325 135,257 165,230 190,215', '260,180 275,175 280,210 268,225', '380,225 435,228 440,250 465,305 378,305',
        '222,380 245,368 270,375 300,375 305,395 290,410 300,430 310,455 265,455 262,430 240,437 222,420', '205,388 222,380 222,420 208,420', '140,395 178,398 178,432 150,437', '78,350 90,345 108,360 110,378 85,378',
        '268,458 300,460 298,485 275,490', '330,438 412,435 418,455 410,480 408,500 412,545 405,565 375,558 357,560 355,525 315,515 318,490 330,470', '290,515 315,515 355,528 358,600 287,600',
        '415,480 450,478 480,505 485,548 445,550 415,520', '455,552 492,547 492,585 450,615 452,655 430,672 425,640 435,600 452,590 440,575', '318,690 345,690 345,672 380,660 415,640 430,640 432,690 390,735 330,740',
      ]} />
      <Lines d="M265 430L290 425L300 400M445 235L478 285M465 215L455 240" />
      <Land shade="spain" shapes={['135,112 190,115 217,127 200,150 185,180 158,187 148,180 155,128 135,125', '215,150 221,151']} />
    </g>
  );
}

function WorldMap() {
  return (
    <svg className="world" viewBox="12 570 1255 573" role="img" aria-label="Visitas por país/territorio">
      <NorthAmerica />
      <LatinAmerica />
      <NorthEurasia />
      <SouthernOldWorld />
    </svg>
  );
}

/* ---------- small icons ---------- */

const Triangle = ({ w = 10, h = 6, color = '#aaa' }) => (
  <svg width={w} height={h} viewBox="0 0 10 6" preserveAspectRatio="none" aria-hidden="true"><path d="M0 0h10L5 6z" fill={color} /></svg>
);

const graphIcons = [
  ['Día', <g><rect x="1" y="1" width="18" height="15" fill="#fff" stroke="#888" /><path d="M4 4h3v2H4z" fill="#555" /><path d="M9 5h7M4 8.500h12M4 11h12M4 13.500h12" stroke="#bbb" /></g>],
  ['Semana', <g><rect x="1" y="1" width="18" height="15" fill="#fff" stroke="#888" /><path d="M4 4.500h12" stroke="#555" strokeWidth="2" /><path d="M4 8.500h12M4 11h12M4 13.500h12" stroke="#bbb" /></g>],
  ['Mes', <g><rect x="1" y="1" width="18" height="15" fill="#fff" stroke="#444" /><path d="M3 4.500h14M3 8.500h14M3 12.500h14" stroke="#444" strokeWidth="2" /></g>],
];

const viewIcons = [
  ['Tabla', <g><rect x="1" width="18" height="18" fill="#fff" /><path d="M3 4h14M3 9h14M3 14h14" stroke="#666" strokeWidth="3" strokeDasharray="4 1" /></g>],
  ['Porcentaje', <g><circle cx="10" cy="9" r="8.500" fill="#888" /><path d="M10 9V1.500A7.500 7.500 0 0 1 17.500 9z" fill="#ccc" /><path d="M10 3v6h7" stroke="#fff" fill="none" /></g>],
  ['Rendimiento', <path d="M2 3h16M2 9h9M2 15h13" stroke="#666" strokeWidth="4" />],
  ['Comparación', <g stroke="#666" strokeWidth="3" fill="none"><path d="M2 3h9M10 9h6M10 15h8" /><path d="M10 2v15" strokeWidth="2" /></g>],
  ['Dinámica', <g stroke="#666"><path d="M0 2.500h20" strokeWidth="3" strokeDasharray="3 1" /><path d="M2 5v13" strokeWidth="3" strokeDasharray="3 1" /><path d="M7.500 6v12M11.500 6v12M15.500 6v12M19.500 6v12" stroke="#999" strokeDasharray="2 1" /></g>],
];

function IconGroup({ label, icons, active, wide }) {
  return (
    <Views>
      <span>{label}</span>
      <ButtonGroup role="group" aria-label={label}>
        {icons.map(([name, art], i) => (
          <IconButton key={name} type="button" title={name} aria-label={name} aria-pressed={i === active} $active={i === active} $wide={wide}>
            <svg width="20" height="18" viewBox="0 0 20 18" aria-hidden="true">{art}</svg>
          </IconButton>
        ))}
      </ButtonGroup>
    </Views>
  );
}

/* ---------- page ---------- */

export default function App() {
  return (
    <main>
      <GlobalStyle />
      <Summary>
        <Header>
          <Title>Contenido principal</Title>
          <DateButton type="button">
            <DateText>01/01/2007 - 11/06/2010</DateText>
            <DateArrow><Triangle w={14} h={8} /></DateArrow>
          </DateButton>
        </Header>
        <Toolbar>
          <MetricTab type="button">
            <svg width="22" height="14" viewBox="0 0 22 14" aria-hidden="true"><path d="M1 12L6 6L11 11L17 2L21 6" fill="none" stroke="#3f8fd0" strokeWidth="1.800" /></svg>
            Páginas vistas
            <Triangle />
          </MetricTab>
          <IconGroup label="Gráfico realizado por:" icons={graphIcons} active={2} wide />
        </Toolbar>
        <ChartPanel>
          <PageviewsChart />
          <Handle type="button" aria-label="Mostrar u ocultar anotaciones"><Triangle w={9} h={5} color="#777" /></Handle>
        </ChartPanel>
        <Headline>4.211 páginas se han visto en total de 279.181 veces.</Headline>
        <Toolbar>
          <SectionTab>Rendimiento del contenido</SectionTab>
          <IconGroup label="Vistas:" icons={viewIcons} active={0} />
        </Toolbar>
        <Metrics>
          {metrics.map((m) => (
            <Metric key={m.label}>
              <MetricLabel>
                <span>{m.label}</span>
                <Help type="button" aria-label={`Ayuda: ${m.label}`}>?</Help>
              </MetricLabel>
              <MetricValue>{m.value}</MetricValue>
              <MetricNote>
                <NoteLine>{m.note}</NoteLine>
                <NoteLine>{m.prefix && <span>{m.prefix}</span>}<b>{m.strong}</b></NoteLine>
              </MetricNote>
            </Metric>
          ))}
        </Metrics>
      </Summary>
      <Detail>
        <MapPanel>
          <WorldMap />
          <Legend>
            <LegendTitle>Visitas</LegendTitle>
            <LegendScale>
              <span>1</span>
              <Ramp>{swatches.map(([a, b]) => <Swatch key={a} $from={a} $to={b} />)}</Ramp>
              <span>59.941</span>
            </LegendScale>
          </Legend>
        </MapPanel>
        <TablePanel>
          <Table>
            <colgroup>
              <Col $w="43px" /><Col $w="auto" /><Col $w="150px" /><Col $w="150px" /><Col $w="149px" /><Col $w="150px" /><Col $w="150px" />
            </colgroup>
            <thead>
              <tr>
                <HeadCell aria-label="Posición" />
                <HeadCell $left scope="col">
                  <LevelLabel>
                    Nivel de detalle:
                    <SelectBox>
                      <Select defaultValue="pais">
                        <option value="pais">País/territorio</option>
                        <option value="ciudad">Ciudad</option>
                      </Select>
                      <svg width="21" height="20" viewBox="0 0 21 20" aria-hidden="true"><path d="M0 0h21v20H0z" fill="#e3f1fb" /><path d="M6 5l4.500 4L15 5M6 11l4.500 4L15 11" fill="none" stroke="#4a78b0" strokeWidth="1.600" /></svg>
                    </SelectBox>
                  </LevelLabel>
                </HeadCell>
                <HeadCell $sorted scope="col" aria-sort="descending">
                  <SortLabel>
                    Visitas
                    <svg width="14" height="16" viewBox="0 0 14 16" aria-hidden="true"><path d="M7 1v13M1.500 8.500L7 14l5.500-5.500" fill="none" stroke="#666" strokeWidth="2" /></svg>
                  </SortLabel>
                </HeadCell>
                <HeadCell scope="col">Páginas/visita</HeadCell>
                <HeadCell scope="col">Promedio de tiempo en el sitio</HeadCell>
                <HeadCell scope="col">Porcentaje de visitas nuevas</HeadCell>
                <HeadCell scope="col">Porcentaje de rebote</HeadCell>
              </tr>
            </thead>
            <tbody>
              {rows.map(([country, visits, ...rest], i) => (
                <Row key={country}>
                  <Cell>{i + 1}.</Cell>
                  <Cell $left><CountryLink href={`#${encodeURIComponent(country)}`}>{country}</CountryLink></Cell>
                  <Cell $sorted>{visits}</Cell>
                  {rest.map((v, k) => <Cell key={k}>{v}</Cell>)}
                </Row>
              ))}
            </tbody>
          </Table>
        </TablePanel>
      </Detail>
    </main>
  );
}
